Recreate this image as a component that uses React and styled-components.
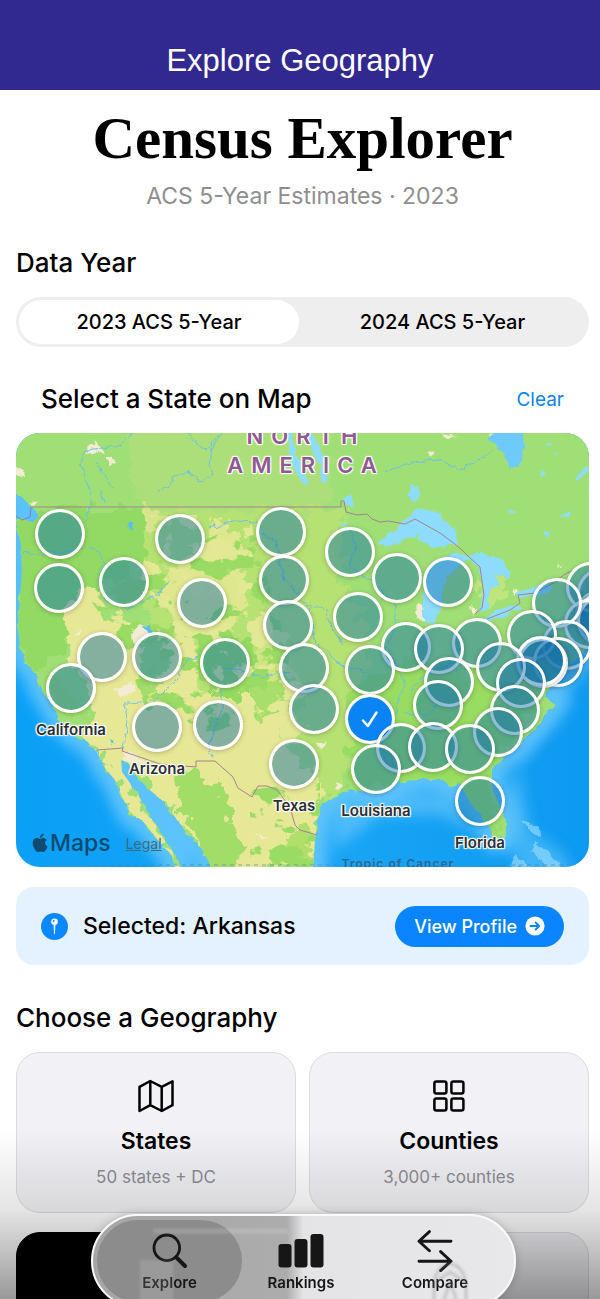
import { useState } from "react";
import styled, { createGlobalStyle, css } from "styled-components";

const MAP_X = 16;
const MAP_Y = 433;
const MAP_W = 573;
const MAP_H = 434;

const pins = [
  { name: "Washington", x: 60, y: 534 },
  { name: "Oregon", x: 59, y: 588 },
  { name: "Idaho", x: 124, y: 582 },
  { name: "Montana", x: 180, y: 539 },
  { name: "Wyoming", x: 202, y: 603 },
  { name: "North Dakota", x: 281, y: 532 },
  { name: "South Dakota", x: 284, y: 580 },
  { name: "Nebraska", x: 288, y: 625 },
  { name: "Kansas", x: 304, y: 668 },
  { name: "Oklahoma", x: 314, y: 709 },
  { name: "Nevada", x: 102, y: 657 },
  { name: "Utah", x: 157, y: 657 },
  { name: "Colorado", x: 225, y: 663 },
  { name: "California", x: 71, y: 688, label: true },
  { name: "Arizona", x: 157, y: 727, label: true },
  { name: "New Mexico", x: 218, y: 725 },
  { name: "Texas", x: 294, y: 764, label: true },
  { name: "Minnesota", x: 350, y: 552 },
  { name: "Wisconsin", x: 397, y: 578 },
  { name: "Michigan", x: 448, y: 582 },
  { name: "Iowa", x: 358, y: 617 },
  { name: "Maine", x: 602, y: 593 },
  { name: "New Hampshire", x: 600, y: 615 },
  { name: "Vermont", x: 591, y: 587 },
  { name: "Massachusetts", x: 601, y: 618 },
  { name: "Rhode Island", x: 602, y: 621 },
  { name: "Connecticut", x: 589, y: 624 },
  { name: "New York", x: 557, y: 603 },
  { name: "New Jersey", x: 567, y: 645 },
  { name: "Pennsylvania", x: 532, y: 635 },
  { name: "Delaware", x: 558, y: 662 },
  { name: "Maryland", x: 543, y: 663 },
  { name: "District of Columbia", x: 541, y: 661 },
  { name: "Ohio", x: 477, y: 643 },
  { name: "Illinois", x: 406, y: 647 },
  { name: "Indiana", x: 439, y: 649 },
  { name: "West Virginia", x: 501, y: 667 },
  { name: "Virginia", x: 521, y: 683 },
  { name: "Missouri", x: 370, y: 670 },
  { name: "Kentucky", x: 449, y: 682 },
  { name: "Tennessee", x: 438, y: 705 },
  { name: "North Carolina", x: 515, y: 710 },
  { name: "South Carolina", x: 498, y: 732 },
  { name: "Arkansas", x: 370, y: 719 },
  { name: "Mississippi", x: 401, y: 748 },
  { name: "Alabama", x: 433, y: 747 },
  { name: "Georgia", x: 470, y: 749 },
  { name: "Louisiana", x: 376, y: 769, label: true },
  { name: "Florida", x: 480, y: 801, label: true },
];

const LAND =
  "M0 420V494L18 494L30 505L40 515L32 523L22 518L16 522L21 545L22 570L20 600L18 625L20 648L26 662L36 674L42 690L52 705L60 720L75 735L88 742L97 752L105 768L115 780L120 792L125 803L132 816L142 820L150 830L162 845L172 855L178 880H184L175 855L163 838L158 828L148 813L138 795L130 783L122 772L121 760L128 762L135 775L150 790L158 797L165 805L172 812L180 825L192 838L205 853L216 880H312L315 840L317 820L323 803L340 795L350 790L367 792L383 790L400 782L423 778L443 780L450 786L460 783L467 797L478 813L490 827L495 838L503 838L507 827L500 807L492 787L492 770L500 760L517 747L533 730L547 715L555 703L545 697L548 690L563 677L575 660L600 640V420Z";

function Terrain() {
  return (
    <TerrainSvg
      viewBox={`${MAP_X} ${MAP_Y} ${MAP_W} ${MAP_H}`}
      preserveAspectRatio="none"
      aria-hidden="true"
    >
      <defs>
        <linearGradient id="sea" x1="0" y1="0" x2="1" y2="0">
          <stop offset="0" stopColor="#0aa0f7" />
          <stop offset="0.55" stopColor="#18a5f5" />
          <stop offset="1" stopColor="#0b98f0" />
        </linearGradient>
        <filter id="soft" x="-20%" y="-20%" width="140%" height="140%">
          <feGaussianBlur stdDeviation="7" />
        </filter>
        <filter id="ragged" x="-5%" y="-5%" width="110%" height="110%" colorInterpolationFilters="sRGB">
          <feTurbulence type="fractalNoise" baseFrequency="0.07" numOctaves="4" seed="4" />
          <feDisplacementMap in="SourceGraphic" scale="30" xChannelSelector="R" yChannelSelector="G" />
        </filter>
        <filter id="coast" x="-5%" y="-5%" width="110%" height="110%" colorInterpolationFilters="sRGB">
          <feTurbulence type="fractalNoise" baseFrequency="0.12" numOctaves="3" seed="2" />
          <feDisplacementMap in="SourceGraphic" scale="7" xChannelSelector="R" yChannelSelector="G" />
        </filter>
        <filter id="greens" x="0" y="0" width="100%" height="100%" colorInterpolationFilters="sRGB">
          <feTurbulence type="fractalNoise" baseFrequency="0.035 0.045" numOctaves="5" seed="11" />
          <feColorMatrix values="0 0 0 0 0.6 0 0 0 0 0.86 0 0 0 0 0.39 22 0 0 0 -12" />
          <feComposite in2="SourceGraphic" operator="in" />
        </filter>
        <filter id="yellows" x="0" y="0" width="100%" height="100%" colorInterpolationFilters="sRGB">
          <feTurbulence type="fractalNoise" baseFrequency="0.04 0.05" numOctaves="5" seed="23" />
          <feColorMatrix values="0 0 0 0 0.89 0 0 0 0 0.91 0 0 0 0 0.58 22 0 0 0 -12.4" />
          <feComposite in2="SourceGraphic" operator="in" />
        </filter>
        <clipPath id="land">
          <path d={LAND} />
        </clipPath>
      </defs>

      <rect x="0" y="420" width="620" height="470" fill="url(#sea)" />
      <path d={LAND} fill="none" stroke="#6fcbfd" strokeWidth="26" filter="url(#soft)" opacity="0.8" />
      <path d="M560 690L520 770L530 830L560 850L580 880H520L500 800Z" fill="#5fc4fb" opacity="0.6" filter="url(#soft)" />
      <path d="M330 810L400 790L450 795L470 830L440 815L380 815L335 850Z" fill="#6fcbfd" opacity="0.6" filter="url(#soft)" />
      <g fill="#8fd8fb" opacity="0.7" filter="url(#coast)">
        <path d="M522 820L540 828L541 838L530 832ZM535 842L552 855L560 867H548L532 852ZM515 855L530 867H508Z" />
      </g>

      <path d={LAND} fill="#a0df76" filter="url(#coast)" />

      <g clipPath="url(#land)">
        <g filter="url(#ragged)">
          <path d="M132 425H330V510H142L128 470Z" fill="#acdf7a" />
          <path d="M150 510H345L340 580L370 640L360 700L340 800H300L200 700L140 600Z" fill="#b6e274" />
          <path d="M16 510H150L146 560L100 590L66 605L60 650L40 670L0 640V520Z" fill="#93da64" />
          <path d="M350 690L420 660L500 680L545 690L500 750L490 800L505 840H490L450 780L350 790Z" fill="#98dc62" />
          <path d="M66 606L92 584L106 612L132 622L156 628L190 640L200 690L250 690L290 700L286 740L320 790L316 870H214L190 835L160 795L122 765L185 880H165L110 775L84 735L92 708L96 694L78 672L62 640Z" fill="#e7e896" />
          <path d="M210 522L240 530L238 560L248 590L240 620L225 640L196 632L172 620L166 580L180 560L200 556Z" fill="#dfe78f" />
          <path d="M250 620L285 640L300 690L290 720L262 690Z" fill="#cfe583" />
          <path d="M138 505L158 508L170 528L150 526Z" fill="#d7e48b" />
          <path d="M196 640L225 628L256 650L262 680L240 700L212 692L198 672Z" fill="#94da60" />
          <path d="M178 768L205 772L228 800L240 842L236 880H214L196 832L176 806Z" fill="#a2dd68" />
          <path d="M138 640L158 632L166 670L150 700L140 690Z" fill="#a3dd6d" />
          <path d="M40 668L56 675L82 712L86 724L66 714L48 694Z" fill="#a1dc67" />
          <path d="M240 690L290 670L300 710L260 716Z" fill="#a8de6a" />
          <path d="M285 830L310 825L312 870H290Z" fill="#b0e06b" />
          <path d="M475 588L498 580L510 592L488 610Z" fill="#bfe57c" />
        </g>
        <path d="M90 600L160 560L250 520L280 620L300 700L250 720L190 740L150 720L120 640Z" fill="#fff" filter="url(#greens)" />
        <path d="M150 515L250 515L270 620L310 700L320 790L250 770L240 700L180 640L140 590Z" fill="#fff" filter="url(#yellows)" />
        <path d="M250 790L320 780L320 870H250Z" fill="#fff" filter="url(#greens)" />
        <g fill="#f3ecd2" filter="url(#coast)">
          <path d="M88 444L94 446L97 440L101 448L104 454L96 452L86 454ZM105 457L113 457L116 465L110 466ZM16 468L24 470L25 478L16 475ZM31 502L38 501L35 506Z" />
          <path d="M132 634L140 625L150 626L154 636L140 640L134 648ZM116 688L134 684L136 692L118 696ZM122 752L138 756L148 766L124 760ZM256 833L268 838L262 840ZM74 636L82 626L80 634Z" />
          <path d="M416 600L422 604L424 622L417 618ZM470 606L478 610L472 616ZM512 588L519 592L514 597ZM442 433L456 436L446 438ZM490 433L500 436L492 439ZM428 452L435 453L430 458ZM317 743L326 742L321 751ZM334 782L343 785L337 791ZM557 564L563 565L558 568Z" />
        </g>
      </g>

      <g fill="#8edcfd" filter="url(#coast)">
        <path d="M377 543L397 527L413 513L417 508L440 512L443 522L455 527L458 545L447 545L433 549L418 538L420 533L390 547Z" />
        <path d="M425 577L433 562L457 553L473 557L450 573L443 590L441 613L433 624L423 622L423 600Z" />
        <path d="M467 555L480 553L500 558L510 573L508 580L493 572L500 585L490 590L487 610L480 612L483 587L480 570Z" />
        <path d="M482 621L497 610L517 604L521 609L500 619Z" />
        <path d="M515 593L533 588L553 583L550 592L533 597L520 597Z" />
        <path d="M487 438L500 430H523L524 453L518 467L510 469L503 453Z" fill="#6fcafc" />
        <ellipse cx="415" cy="493" rx="6" ry="8" />
        <path d="M284 430H292L296 455L310 486H303L292 464ZM308 430L320 447L325 465L328 483L320 482L321 466L310 448Z" />
        <path d="M344 497L352 495L354 504L346 507ZM576 478L586 466L588 470L578 482ZM508 509L518 512L512 514ZM561 516L570 510L568 517ZM545 533L549 532L548 540ZM541 472L545 474L541 476ZM553 452L558 453L554 455ZM547 442L552 444L546 447ZM340 524L348 520L344 526Z" />
        <path d="M144 626L149 625L153 632L148 633ZM129 522L133 522L131 532ZM110 738L115 740L112 743Z" fill="#59bdf7" />
      </g>

      <g fill="none" stroke="#66bdf0" strokeWidth="1" opacity="0.9" filter="url(#coast)">
        <path d="M133 433L118 446L86 450L80 464L90 488L91 505L84 524M96 462L112 488M101 490L103 502" />
        <path d="M222 433L212 446L210 466L213 474L200 482L188 472L174 476L168 488L158 491M188 433L206 450L218 436" />
        <path d="M22 552L38 554L70 552L88 546L100 552L104 566L98 580L104 600L130 608L148 600L165 588L170 580" />
        <path d="M210 528L234 521L258 522L264 534L275 540L284 580L310 608L314 640L340 665L366 672" />
        <path d="M350 530L356 545L350 566L374 582L395 605L396 622L386 650L400 670L404 686L398 702L392 722L380 748L390 772" />
        <path d="M310 604L326 610L332 628L344 645" />
        <path d="M200 656L188 660L175 682L155 700L146 702L130 704L124 704L128 722L124 748" />
        <path d="M222 688L222 710L208 745L213 758M224 668L260 676L290 672" />
        <path d="M385 472L400 467L412 462L440 460L458 470L478 460L494 450" />
        <path d="M410 690L420 680L440 668L460 660M404 712L420 718L438 705" />
      </g>
      <g fill="none" stroke="#a58292" strokeWidth="1">
        <path d="M31 507H341V501L344 501L346 512L357 515L367 514L372 519L380 522L388 521L405 524L415 519L440 533L455 544L462 550L468 556L480 567L484 595L482 608L475 614M487 619L510 610L520 603L518 595L535 593L555 582L565 574L589 563" />
        <path d="M97 750L123 748L122 751L160 764L196 767V761H215L233 777L238 788L252 797L258 786L267 786L277 790L290 807L295 825L300 830L317 835" />
        <path d="M16 516L22 520L30 517L31 507" stroke="#7d7fc8" />
      </g>
      <path d="M46 865H340M455 865H589" stroke="#4d89ac" strokeWidth="1" strokeDasharray="4 4" opacity="0.7" />
    </TerrainSvg>
  );
}

function AppleMark() {
  return (
    <svg width="17" height="20" viewBox="0 0 17 20" fill="currentColor" aria-hidden="true">
      <path d="M11.6 0.5C11.7 1.7 11.2 2.8 10.5 3.6C9.8 4.4 8.8 5 7.8 4.9C7.7 3.8 8.2 2.7 8.9 1.9C9.6 1.1 10.7 0.6 11.6 0.5ZM14.8 7C13.7 7.7 13.1 8.7 13.1 10C13.1 11.5 14 12.8 15.6 13.4C15.2 14.7 14.5 16 13.6 17.2C12.9 18.1 12.2 19 11.1 19C10 19 9.7 18.4 8.4 18.4C7.2 18.4 6.8 19 5.8 19C4.7 19 4 18.1 3.2 17C1.7 14.9 0.7 12 0.7 9.7C0.7 6.7 2.6 5 4.7 5C6 5 7 5.8 7.9 5.8C8.8 5.8 9.9 4.9 11.5 4.9C12.9 5 14.1 5.7 14.8 7Z" />
    </svg>
  );
}

function PinIcon() {
  return (
    <svg width="27" height="27" viewBox="0 0 27 27" aria-hidden="true">
      <circle cx="13.5" cy="13.5" r="13.5" fill="#0a88ff" />
      <circle cx="13.5" cy="8.8" r="3.3" fill="#fff" />
      <circle cx="12.7" cy="8" r="0.9" fill="#0a88ff" />
      <path d="M12.6 11.5H14.4L14 20.5Q13.5 22 13 20.5Z" fill="#fff" />
    </svg>
  );
}

function ArrowIcon() {
  return (
    <svg width="20" height="20" viewBox="0 0 20 20" fill="none" aria-hidden="true">
      <circle cx="10" cy="10" r="9.6" fill="#fff" />
      <path d="M5.5 10H14M10.6 6.5L14.2 10L10.6 13.5" stroke="#0a84ff" strokeWidth="1.8" strokeLinecap="round" strokeLinejoin="round" />
    </svg>
  );
}

function MapIcon() {
  return (
    <svg width="36" height="34" viewBox="0 0 36 34" fill="none" stroke="#000" strokeWidth="2.5" strokeLinejoin="round" aria-hidden="true">
      <path d="M1.5 7.8L12.3 2L23.7 7.8L34.5 2.4V26.2L23.7 32L12.3 26.2L1.5 32ZM12.3 2V26.2M23.7 7.8V32" />
    </svg>
  );
}

function GridIcon() {
  return (
    <svg width="32" height="32" viewBox="0 0 32 32" fill="none" stroke="#000" strokeWidth="2.5" aria-hidden="true">
      <rect x="1.4" y="1.4" width="12" height="12" rx="2" />
      <rect x="18.4" y="1.4" width="12" height="12" rx="2" />
      <rect x="1.4" y="18.4" width="12" height="12" rx="2" />
      <rect x="18.4" y="18.4" width="12" height="12" rx="2" />
    </svg>
  );
}

function SearchIcon() {
  return (
    <svg width="36" height="36" viewBox="0 0 36 36" fill="none" stroke="#161616" strokeLinecap="round" aria-hidden="true">
      <circle cx="14.8" cy="14.8" r="12.8" strokeWidth="2.8" />
      <path d="M24.3 24.3L33 33" strokeWidth="4" />
    </svg>
  );
}

function BarsIcon() {
  return (
    <svg width="46" height="36" viewBox="0 0 46 36" fill="#161616" aria-hidden="true">
      <rect x="0.5" y="11" width="13" height="23.5" rx="3" />
      <rect x="16.5" y="6" width="13" height="28.5" rx="3" />
      <rect x="32.5" y="1" width="13" height="33.5" rx="3" />
    </svg>
  );
}

function SwapIcon() {
  return (
    <svg width="36" height="42" viewBox="0 0 36 42" fill="none" stroke="#161616" strokeWidth="2.9" strokeLinecap="round" strokeLinejoin="round" aria-hidden="true">
      <path d="M34 11.2H2M12.4 1.6L2 11.2L12.4 20.8M2 31.2H34M23.6 21.6L34 31.2L23.6 40.6" />
    </svg>
  );
}

const cards = [
  { title: "States", note: "50 states + DC", icon: <MapIcon /> },
  { title: "Counties", note: "3,000+ counties", icon: <GridIcon /> },
];

const tabs = [
  { title: "Explore", icon: <SearchIcon /> },
  { title: "Rankings", icon: <BarsIcon /> },
  { title: "Compare", icon: <SwapIcon /> },
];

function App() {
  const [year, setYear] = useState("2023");
  const [selected, setSelected] = useState("Arkansas");
  const [tab, setTab] = useState("Explore");

  return (
    <>
      <GlobalStyle />
      <Screen>
        <TopBar>Explore Geography</TopBar>
        <Content>
          <Title>Census Explorer</Title>
          <Subtitle>ACS 5-Year Estimates · {year}</Subtitle>

          <Heading>Data Year</Heading>
          <Segmented>
            {["2023", "2024"].map((y) => (
              <Segment key={y} $active={year === y} onClick={() => setYear(y)}>
                {y} ACS 5-Year
              </Segment>
            ))}
          </Segmented>

          <MapHeader>
            <Heading>Select a State on Map</Heading>
            <ClearButton onClick={() => setSelected("")}>Clear</ClearButton>
          </MapHeader>
          <MapFrame>
            <Terrain />
            <Place $x={306} $y={436} $big>NORTH</Place>
            <Place $x={306} $y={465} $big>AMERICA</Place>
            <Place $x={398} $y={864} $faint>Tropic of Cancer</Place>
            {pins.map((pin) => (
              <Pin
                key={pin.name}
                $x={pin.x}
                $y={pin.y}
                $selected={selected === pin.name}
                aria-label={pin.name}
                onClick={() => setSelected(pin.name)}
              >
                {selected === pin.name && (
                  <svg width="20" height="20" viewBox="0 0 20 20" fill="none" stroke="#fff" strokeWidth="2.4" strokeLinecap="round" strokeLinejoin="round">
                    <path d="M3 11.5L7.8 17L16.5 3.5" />
                  </svg>
                )}
              </Pin>
            ))}
            {pins
              .filter((pin) => pin.label)
              .map((pin) => (
                <Place key={pin.name} $x={pin.x} $y={pin.y + 42}>
                  {pin.name}
                </Place>
              ))}
            <Attribution>
              <Brand>
                <AppleMark />
                Maps
              </Brand>
              <a href="#legal">Legal</a>
            </Attribution>
          </MapFrame>

          <Selection>
            <PinIcon />
            <span>Selected: {selected}</span>
            <ProfileButton>
              View Profile
              <ArrowIcon />
            </ProfileButton>
          </Selection>

          <Heading>Choose a Geography</Heading>
          <Cards>
            {cards.map((card) => (
              <Card key={card.title}>
                <CardIcon>{card.icon}</CardIcon>
                <strong>{card.title}</strong>
                <small>{card.note}</small>
              </Card>
            ))}
            <Card $dark aria-label="Places" />
            <Card aria-label="Regions" />
          </Cards>
        </Content>
      </Screen>
      <Shade />
      <TabBar>
        {tabs.map((item) => (
          <Tab key={item.title} $active={tab === item.title} onClick={() => setTab(item.title)}>
            <TabIcon>{item.icon}</TabIcon>
            {item.title}
          </Tab>
        ))}
        <Glass viewBox="0 0 421 90" aria-hidden="true">
          <g filter="url(#glass)">
            <path d="M47 90V44H80V90Z" fill="#fff" opacity="0.13" />
            <path d="M60 15H195" stroke="#fff" strokeWidth="5" opacity="0.16" />
            <path d="M341 90V72C341 56 349 48 357 48C365 48 373 56 373 72V90M349 90L357 66L366 90M345 64L357 56L369 64" fill="none" stroke="#777" strokeWidth="2" opacity="0.45" />
          </g>
          <filter id="glass">
            <feGaussianBlur stdDeviation="1.5" />
          </filter>
        </Glass>
      </TabBar>
    </>
  );
}

const GlobalStyle = createGlobalStyle`
  * {
    box-sizing: border-box;
  }

  body {
    margin: 0;
    background: #fff;
    color: #000;
    font-family: Inter, "Liberation Sans", sans-serif;
  }

  button {
    margin: 0;
    padding: 0;
    border: 0;
    background: none;
    color: inherit;
    font: inherit;
    cursor: pointer;
  }
`;

const Screen = styled.div`
  height: 100vh;
  overflow-y: auto;
  scrollbar-width: none;
`;

const TopBar = styled.header`
  display: flex;
  align-items: flex-end;
  justify-content: center;
  height: 90px;
  padding-bottom: 11px;
  background: #312890;
  color: #fff;
  font-family: "Liberation Sans", sans-serif;
  font-size: 31px;
  line-height: 36px;
`;

const Content = styled.main`
  padding: 16px 11px 16px 16px;
`;

const Title = styled.h1`
  margin: 0;
  text-align: center;
  font-family: "Liberation Serif", serif;
  font-size: 59px;
  font-weight: 700;
  line-height: 64px;
`;

const Subtitle = styled.p`
  margin: 12px 0 37px;
  text-align: center;
  color: #8e8e8e;
  font-size: 23px;
  line-height: 28px;
`;

const Heading = styled.h2`
  margin: 0;
  font-size: 26px;
  font-weight: 500;
  line-height: 32px;
`;

const Segmented = styled.div`
  display: grid;
  grid-template-columns: 280fr 287fr;
  height: 50px;
  margin: 18px 0 36px;
  padding: 3px;
  border-radius: 25px;
  background: #eeeeef;
`;

const Segment = styled.button`
  border-radius: 22px;
  background: ${(props) => (props.$active ? "#fff" : "transparent")};
  font-size: 20px;
  font-weight: 500;
`;

const MapHeader = styled.div`
  display: flex;
  align-items: center;
  justify-content: space-between;
  padding: 0 25px;
  margin-bottom: 18px;
`;

const ClearButton = styled.button`
  color: #0a84e6;
  font-size: 19px;
`;

const MapFrame = styled.div`
  position: relative;
  overflow: hidden;
  aspect-ratio: 573 / 434;
  border-radius: 24px;
`;

const TerrainSvg = styled.svg`
  display: block;
  width: 100%;
  height: 100%;
`;

const onMap = css`
  position: absolute;
  left: ${(props) => ((props.$x - MAP_X) / MAP_W) * 100}%;
  top: ${(props) => ((props.$y - MAP_Y) / MAP_H) * 100}%;
  transform: translate(-50%, -50%);
`;

const Pin = styled.button`
  ${onMap}
  display: grid;
  place-items: center;
  width: 50px;
  height: 50px;
  border: 3px solid #fff;
  border-radius: 50%;
  background: ${(props) => (props.$selected ? "#0a84f5" : "rgba(14, 108, 172, 0.45)")};
  background-clip: padding-box;
  box-shadow: 0 1px 5px rgba(0, 0, 0, 0.25);
`;

const Place = styled.span`
  ${onMap}
  color: #2b2f33;
  font-size: 15px;
  font-weight: 600;
  line-height: 20px;
  white-space: nowrap;
  text-shadow: 0 0 2px #fff, 1px 1px 1px #fff, -1px -1px 1px #fff, 1px -1px 1px #fff,
    -1px 1px 1px #fff;

  ${(props) =>
    props.$big &&
    css`
      color: #8f5a90;
      font-size: 22px;
      letter-spacing: 8px;
    `}

  ${(props) =>
    props.$faint &&
    css`
      color: #2f6690;
      font-size: 12px;
      letter-spacing: 1px;
      text-shadow: none;
    `}
`;

const Attribution = styled.div`
  position: absolute;
  left: 16px;
  bottom: 10px;
  display: flex;
  align-items: center;
  gap: 15px;
  color: #0f4a70;

  a {
    color: #3e6a80;
    font-size: 14px;
  }
`;

const Brand = styled.span`
  display: flex;
  align-items: center;
  gap: 1px;
  font-size: 23px;
  font-weight: 500;
  line-height: 28px;
`;

const Selection = styled.section`
  display: flex;
  align-items: center;
  gap: 15px;
  height: 78px;
  margin: 20px 0 37px;
  padding: 0 25px;
  border-radius: 18px;
  background: #e3f2fe;
  font-size: 23px;
  font-weight: 500;
`;

const ProfileButton = styled.button`
  display: flex;
  align-items: center;
  gap: 8px;
  height: 41px;
  margin-left: auto;
  padding: 0 19px;
  border-radius: 21px;
  background: #0a84ff;
  color: #fff;
  font-size: 18px;
  font-weight: 500;
`;

const Cards = styled.div`
  display: grid;
  grid-template-columns: 1fr 1fr;
  gap: 19px 13px;
  margin-top: 18px;
`;

const Card = styled.button`
  display: flex;
  flex-direction: column;
  align-items: center;
  height: 161px;
  padding-top: 26px;
  border: 1px solid #dddde0;
  border-radius: 24px;
  background: #f2f2f6;

  ${(props) =>
    props.$dark &&
    css`
      border-color: #000;
      background: #000;
    `}

  strong {
    margin-top: 14px;
    font-size: 23px;
    font-weight: 600;
    line-height: 28px;
  }

  small {
    margin-top: 10px;
    color: #8e8e93;
    font-size: 17px;
    line-height: 24px;
  }
`;

const CardIcon = styled.span`
  display: grid;
  place-items: center;
  height: 34px;
`;

const Shade = styled.div`
  position: fixed;
  inset: auto 0 0;
  height: 170px;
  background: linear-gradient(
    rgba(0, 0, 0, 0),
    rgba(0, 0, 0, 0.1) 47%,
    rgba(0, 0, 0, 0.2) 65%,
    rgba(0, 0, 0, 0.4)
  );
  pointer-events: none;
`;

const TabBar = styled.nav`
  position: fixed;
  left: 50%;
  bottom: -9px;
  display: grid;
  grid-template-columns: 145fr 118fr 150fr;
  width: 425px;
  height: 94px;
  margin-left: -209px;
  padding: 4px;
  border: 2px solid #fafafa;
  border-radius: 47px;
  background: linear-gradient(90deg, #a6a6a6 0%, #acacac 46%, #e4e4e6 50%, #e8e8ea 100%);
  box-shadow: 0 0 8px rgba(0, 0, 0, 0.2);
`;

const Tab = styled.button`
  display: flex;
  flex-direction: column;
  align-items: center;
  justify-content: center;
  border-radius: 42px;
  background: ${(props) => (props.$active ? "#8c8c8c" : "transparent")};
  color: #161616;
  font-size: 15px;
  font-weight: 600;
  line-height: 20px;
`;

const TabIcon = styled.span`
  display: grid;
  place-items: center;
  height: 44px;
`;

const Glass = styled.svg`
  position: absolute;
  inset: 0;
  width: 100%;
  height: 100%;
  pointer-events: none;
`;

export default App;
